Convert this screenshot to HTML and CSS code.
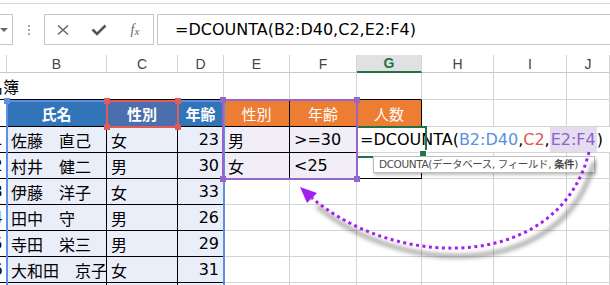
FILE: index.html
```html
<!DOCTYPE html>
<html lang="ja">
<head>
  <meta charset="UTF-8">
  <title>DCOUNTA</title>
  <link rel="stylesheet" href="styles.css">
</head>
<body>
  <div class="page">
    <div class="top-edge"></div>

    <div class="toolbar">
      <div class="namebox"><span class="caret"></span></div>
      <div class="grip"><i></i><i></i><i></i></div>
      <div class="fbuttons">
        <span class="fbtn">
          <svg width="12" height="12" viewBox="0 0 12 12"><path d="M1 1.5 L11 10.5 M11 1.5 L1 10.5" stroke="#6a6a6a" stroke-width="1.6" fill="none"/></svg>
        </span>
        <span class="fbtn">
          <svg width="16" height="12" viewBox="0 0 16 12"><path d="M1.5 5.5 L6 10 L14.5 1.5" stroke="#555" stroke-width="2.6" fill="none"/></svg>
        </span>
        <span class="fbtn fx">f<small>x</small></span>
      </div>
      <div class="formula">=DCOUNTA(B2:D40,C2,E2:F4)</div>
    </div>

    <div class="sheet">
      <!-- column letters -->
      <div class="col"></div>
      <div class="col">B</div>
      <div class="col">C</div>
      <div class="col">D</div>
      <div class="col">E</div>
      <div class="col">F</div>
      <div class="col sel">G</div>
      <div class="col">H</div>
      <div class="col">I</div>
      <div class="col">J</div>

      <!-- row 1 -->
      <div class="title"><span>名簿</span></div>
      <div class="bb"></div>
      <div class="bb"></div>
      <div class="bb"></div>
      <div class="bb"></div>
      <div></div>
      <div></div>
      <div></div>

      <!-- row 2 -->
      <div class="rn"></div>
      <div class="t hb">氏名</div>
      <div class="t hb picked">性別</div>
      <div class="t hb">年齢</div>
      <div class="t ho">性別</div>
      <div class="t ho">年齢</div>
      <div class="t ho">人数</div>
      <div></div>
      <div></div>
      <div></div>

      <!-- row 3 -->
      <div class="rn"><span>1</span></div>
      <div class="t bl">佐藤　直己</div>
      <div class="t bl">女</div>
      <div class="t bl r">23</div>
      <div class="t lv">男</div>
      <div class="t lv">&gt;=30</div>
      <div class="active">=DCOUNTA(<span class="ref-b">B2:D40</span>,<span class="ref-r">C2</span>,<span class="ref-p">E2:F4</span>)</div>

      <!-- row 4 -->
      <div class="rn"><span>2</span></div>
      <div class="t bl">村井　健二</div>
      <div class="t bl">男</div>
      <div class="t bl r">30</div>
      <div class="t lv">女</div>
      <div class="t lv">&lt;25</div>
      <div class="t g4"></div>
      <div></div>
      <div></div>
      <div></div>

      <!-- row 5 -->
      <div class="rn"><span>3</span></div>
      <div class="t bl">伊藤　洋子</div>
      <div class="t bl">女</div>
      <div class="t bl r">33</div>
      <div></div><div></div><div></div><div></div><div></div><div></div>

      <!-- row 6 -->
      <div class="rn"><span>4</span></div>
      <div class="t bl">田中　守</div>
      <div class="t bl">男</div>
      <div class="t bl r">26</div>
      <div></div><div></div><div></div><div></div><div></div><div></div>

      <!-- row 7 -->
      <div class="rn"><span>5</span></div>
      <div class="t bl">寺田　栄三</div>
      <div class="t bl">男</div>
      <div class="t bl r">29</div>
      <div></div><div></div><div></div><div></div><div></div><div></div>

      <!-- row 8 -->
      <div class="rn"><span>6</span></div>
      <div class="t bl">大和田　京子</div>
      <div class="t bl">女</div>
      <div class="t bl r">31</div>
      <div></div><div></div><div></div><div></div><div></div><div></div>

      <!-- row 9 -->
      <div class="rn"><span>7</span></div>
      <div class="t bl"></div>
      <div class="t bl"></div>
      <div class="t bl r"></div>
      <div></div><div></div><div></div><div></div><div></div><div></div>
    </div>

    <!-- range highlights -->
    <div class="range range-b"><i class="h tl"></i></div>
    <div class="range range-r"><i class="h tl"></i><i class="h tr"></i><i class="h bl-h"></i><i class="h br"></i></div>
    <div class="range range-p"><i class="h tl"></i><i class="h tr"></i><i class="h bl-h"></i><i class="h br"></i></div>

    <div class="tip">DCOUNTA(データベース, フィールド, <b>条件</b>)</div>

    <svg class="arrow" width="610" height="285" viewBox="0 0 610 285">
      <defs>
        <filter id="soft" x="-20%" y="-20%" width="140%" height="140%">
          <feGaussianBlur stdDeviation="2"/>
        </filter>
      </defs>
      <path d="M591 158 C562 274 402 276 314 202" fill="none" stroke="#000" stroke-opacity=".36" stroke-width="4" filter="url(#soft)" transform="translate(3 4)"/>
      <path d="M589 152 C560 270 400 272 312 198" fill="none" stroke="#a020f0" stroke-width="3" stroke-dasharray="3 3.5"/>
      <polygon points="300,187 317,193 307,203" fill="#a020f0"/>
    </svg>
  </div>
</body>
</html>
```

FILE: styles.css
```css
* {
  box-sizing: border-box;
  margin: 0;
  padding: 0;
}

body {
  font-family: "DejaVu Sans", "Noto Sans CJK JP", sans-serif;
  background-color: #fff;
  color: #000;
}

.page {
  position: relative;
  width: 610px;
  height: 285px;
  overflow: hidden;
}

.top-edge {
  height: 4px;
  border-bottom: 1px solid #d6d6d6;
}

/* formula bar */
.toolbar {
  display: flex;
  align-items: center;
  height: 31px;
  margin: 10px 0;
}

.namebox {
  position: relative;
  width: 43px;
  height: 31px;
  margin-left: -30px;
  border: 1px solid #c6c6c6;
}

.caret {
  position: absolute;
  left: 29px;
  top: 13px;
  border-left: 4px solid transparent;
  border-right: 4px solid transparent;
  border-top: 4px solid #666;
}

.grip {
  display: flex;
  flex-direction: column;
  gap: 2px;
  margin-left: 15px;
}

.grip i {
  width: 2px;
  height: 2px;
  background-color: #a8a8a8;
}

.fbuttons {
  display: grid;
  grid-template-columns: repeat(3, 1fr);
  align-items: center;
  width: 110px;
  height: 31px;
  margin-left: 14px;
  border: 1px solid #c6c6c6;
}

.fbtn {
  display: flex;
  justify-content: center;
  align-items: center;
}

.fx {
  font-family: "Liberation Serif", serif;
  font-style: italic;
  font-size: 14px;
  color: #666;
}

.fx small {
  font-size: 11px;
  margin-top: 3px;
}

.formula {
  flex: 1;
  height: 31px;
  margin-left: 3px;
  margin-right: -20px;
  padding-left: 17px;
  border: 1px solid #c6c6c6;
  font-size: 16px;
  line-height: 29px;
  white-space: nowrap;
}

/* worksheet */
.sheet {
  display: grid;
  grid-template-columns: 7px 100px 71px 46px 66px 67px 65px 72px 73px 1fr;
  grid-template-rows: 18px 27px 27px 26px 26px 26px 26px 26px 26px 26px;
}

.sheet > div {
  display: flex;
  align-items: center;
  padding: 0 4px;
  border-right: 1px solid #d4d4d4;
  border-bottom: 1px solid #d4d4d4;
  font-size: 16px;
  white-space: nowrap;
}

.sheet > .col {
  justify-content: center;
  padding: 0;
  font-family: "Liberation Sans", sans-serif;
  font-size: 14px;
  color: #444;
  border-bottom-color: #c8c8c8;
}

.sheet > .col.sel {
  background-color: #e1e1e1;
  color: #217346;
  font-weight: bold;
  border-bottom: 2px solid #217346;
}

.sheet > .title {
  grid-column: span 3;
  padding: 0;
  overflow: hidden;
  border-right: none;
  border-bottom-color: #000;
}

.title span {
  margin-left: -13px;
}

.sheet > .bb {
  border-bottom-color: #000;
}

.sheet > .rn {
  justify-content: flex-end;
  padding: 0;
  overflow: hidden;
  border-bottom-color: #000;
}

.rn span {
  flex-shrink: 0;
  width: 17px;
  text-align: center;
}

.sheet > .t {
  border-right-color: #000;
  border-bottom-color: #000;
}

.sheet > .hb {
  justify-content: center;
  background-color: #3174b8;
  color: #fff;
  font-weight: bold;
  font-size: 15px;
}

.sheet > .hb.picked {
  background-color: #4a6fac;
}

.sheet > .ho {
  justify-content: center;
  background-color: #ec7d32;
  color: #fff;
  font-size: 15px;
}

.sheet > .bl {
  background-color: #eaeef9;
}

.sheet > .lv {
  background-color: #f1eef7;
}

.sheet > .r {
  justify-content: flex-end;
}

.sheet > .active {
  position: relative;
  grid-column: 7 / -1;
  padding-left: 3px;
  border-right: none;
}

.active::before {
  content: "";
  position: absolute;
  left: -1px;
  top: -1px;
  width: 67px;
  height: 28px;
  border: 2px solid #217346;
}

.active::after {
  content: "";
  position: absolute;
  left: 62px;
  top: 23px;
  width: 6px;
  height: 6px;
  background-color: #217346;
  border: 1px solid #fff;
}

.ref-b {
  color: #5b8fe2;
}

.ref-r {
  color: #e25656;
}

.ref-p {
  color: #8e62c6;
  background-color: #e4ddf0;
  padding: 3px 1px;
}

.sheet > .g4 {
  border-bottom-color: #000;
}

/* range highlights over the grid */
.range {
  position: absolute;
  border: 2px solid;
}

.range-b {
  left: 6px;
  top: 100px;
  width: 219px;
  height: 200px;
  border-color: #5d8fe3;
  color: #5d8fe3;
}

.range-r {
  left: 106px;
  top: 100px;
  width: 73px;
  height: 28px;
  border-color: #e25b5b;
  color: #e25b5b;
}

.range-p {
  left: 222px;
  top: 99px;
  width: 136px;
  height: 81px;
  border-color: #9466c9;
  color: #9466c9;
}

.h {
  position: absolute;
  width: 6px;
  height: 6px;
  background-color: currentColor;
}

.tl { left: -4px; top: -4px; }
.tr { right: -4px; top: -4px; }
.bl-h { left: -4px; bottom: -4px; }
.br { right: -4px; bottom: -4px; }

.tip {
  position: absolute;
  left: 373px;
  top: 156px;
  width: 222px;
  height: 17px;
  padding-left: 5px;
  background-color: #fff;
  border: 1px solid #bdbdbd;
  box-shadow: 1px 2px 3px rgba(0, 0, 0, 0.25);
  font-size: 10.5px;
  letter-spacing: -0.4px;
  line-height: 15px;
  color: #4a4a4a;
  white-space: nowrap;
}

.arrow {
  position: absolute;
  left: 0;
  top: 0;
  pointer-events: none;
}
```
